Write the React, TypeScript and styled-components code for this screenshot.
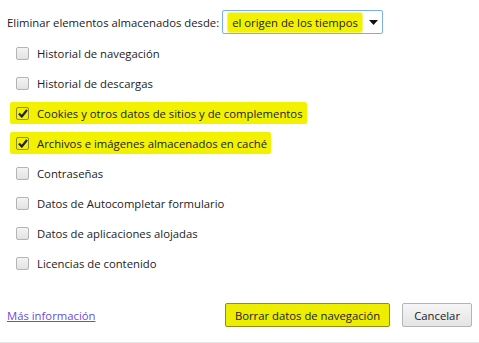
import React, { useState } from 'react';
import styled, { createGlobalStyle } from 'styled-components';

const GlobalStyle = createGlobalStyle`
  html, body {
    margin: 0;
    padding: 0;
    background: #ffffff;
  }
  body {
    font-family: "Open Sans", "Noto Sans", Arial, sans-serif;
    font-size: 11.3px;
    color: #222222;
  }
`;

const Dialog = styled.div`
  width: 479px;
  height: 343px;
  box-sizing: border-box;
  border-bottom: 1px solid #e6e6e6;
  display: flex;
  flex-direction: column;
`;

const Header = styled.div`
  display: flex;
  align-items: center;
  padding: 10px 0 0 7px;
  height: 24px;
  white-space: nowrap;
`;

const HeaderLabel = styled.span`
  margin-right: 3px;
`;

const Select = styled.div`
  width: 161px;
  height: 24px;
  box-sizing: border-box;
  border: 1px solid #7aaee6;
  border-radius: 2px;
  display: flex;
  align-items: center;
  padding-left: 5px;
  background: #fff;
`;

const Highlight = styled.span`
  background: #f2f200;
  padding: 2px 4px;
  border-radius: 2px;
  box-shadow: 0 0 1px 1px rgba(235, 235, 0, 0.6);
`;

const Arrow = styled.span`
  margin-left: auto;
  width: 18px;
  display: flex;
  justify-content: center;
`;

const List = styled.div`
  display: flex;
  flex-direction: column;
  padding: 8px 0 0 16px;
  gap: 8px;
`;

const Row = styled.label<{ $marked?: boolean }>`
  display: flex;
  align-items: center;
  height: 22px;
  gap: 8px;
  align-self: flex-start;
  padding: 0 4px 0 ${p => (p.$marked ? 6 : 0)}px;
  margin-left: ${p => (p.$marked ? -6 : 0)}px;
  background: ${p => (p.$marked ? '#f2f200' : 'transparent')};
  border-radius: 2px;
`;

const Box = styled.span<{ $checked?: boolean }>`
  width: 11px;
  height: 11px;
  border: 1px solid ${p => (p.$checked ? '#8a8a30' : '#b4b4b4')};
  border-radius: 2px;
  background: ${p => (p.$checked ? 'transparent' : 'linear-gradient(#f4f4f4, #e2e2e2)')};
  display: flex;
  align-items: center;
  justify-content: center;
  flex-shrink: 0;
`;

const Footer = styled.div`
  margin-top: auto;
  display: flex;
  align-items: center;
  padding: 0 7px 15px 7px;
`;

const Link = styled.a`
  color: #6a4ce0;
  text-decoration: underline;
  cursor: pointer;
  margin-right: auto;
`;

const Button = styled.button<{ $marked?: boolean }>`
  font: inherit;
  color: #222;
  height: 24px;
  padding: 0 ${p => (p.$marked ? 9 : 11)}px;
  border: 1px solid ${p => (p.$marked ? '#8c8c2a' : '#b5b5b5')};
  border-radius: 2px;
  background: ${p => (p.$marked ? '#eded00' : 'linear-gradient(#f6f6f6, #e4e4e4)')};
  margin-left: 12px;
  cursor: pointer;
`;

const items = [
  { label: 'Historial de navegación', checked: false },
  { label: 'Historial de descargas', checked: false },
  { label: 'Cookies y otros datos de sitios y de complementos', checked: true },
  { label: 'Archivos e imágenes almacenados en caché', checked: true },
  { label: 'Contraseñas', checked: false },
  { label: 'Datos de Autocompletar formulario', checked: false },
  { label: 'Datos de aplicaciones alojadas', checked: false },
  { label: 'Licencias de contenido', checked: false },
];

const Check = () => (
  <svg width="10" height="9" viewBox="0 0 10 9">
    <path d="M1 4.5 L3.8 7.5 L9 1" fill="none" stroke="#222" strokeWidth="2.2" />
  </svg>
);

const App = () => {
  const [state] = useState(items);
  return (
    <>
      <GlobalStyle />
      <Dialog>
        <Header>
          <HeaderLabel>Eliminar elementos almacenados desde:</HeaderLabel>
          <Select>
            <Highlight>el origen de los tiempos</Highlight>
            <Arrow>
              <svg width="9" height="5" viewBox="0 0 9 5">
                <path d="M0 0 H9 L4.5 5 Z" fill="#111" />
              </svg>
            </Arrow>
          </Select>
        </Header>
        <List>
          {state.map(item => (
            <Row key={item.label} $marked={item.checked}>
              <Box $checked={item.checked}>{item.checked && <Check />}</Box>
              {item.label}
            </Row>
          ))}
        </List>
        <Footer>
          <Link>Más información</Link>
          <Button $marked>Borrar datos de navegación</Button>
          <Button>Cancelar</Button>
        </Footer>
      </Dialog>
    </>
  );
};

export default App;
